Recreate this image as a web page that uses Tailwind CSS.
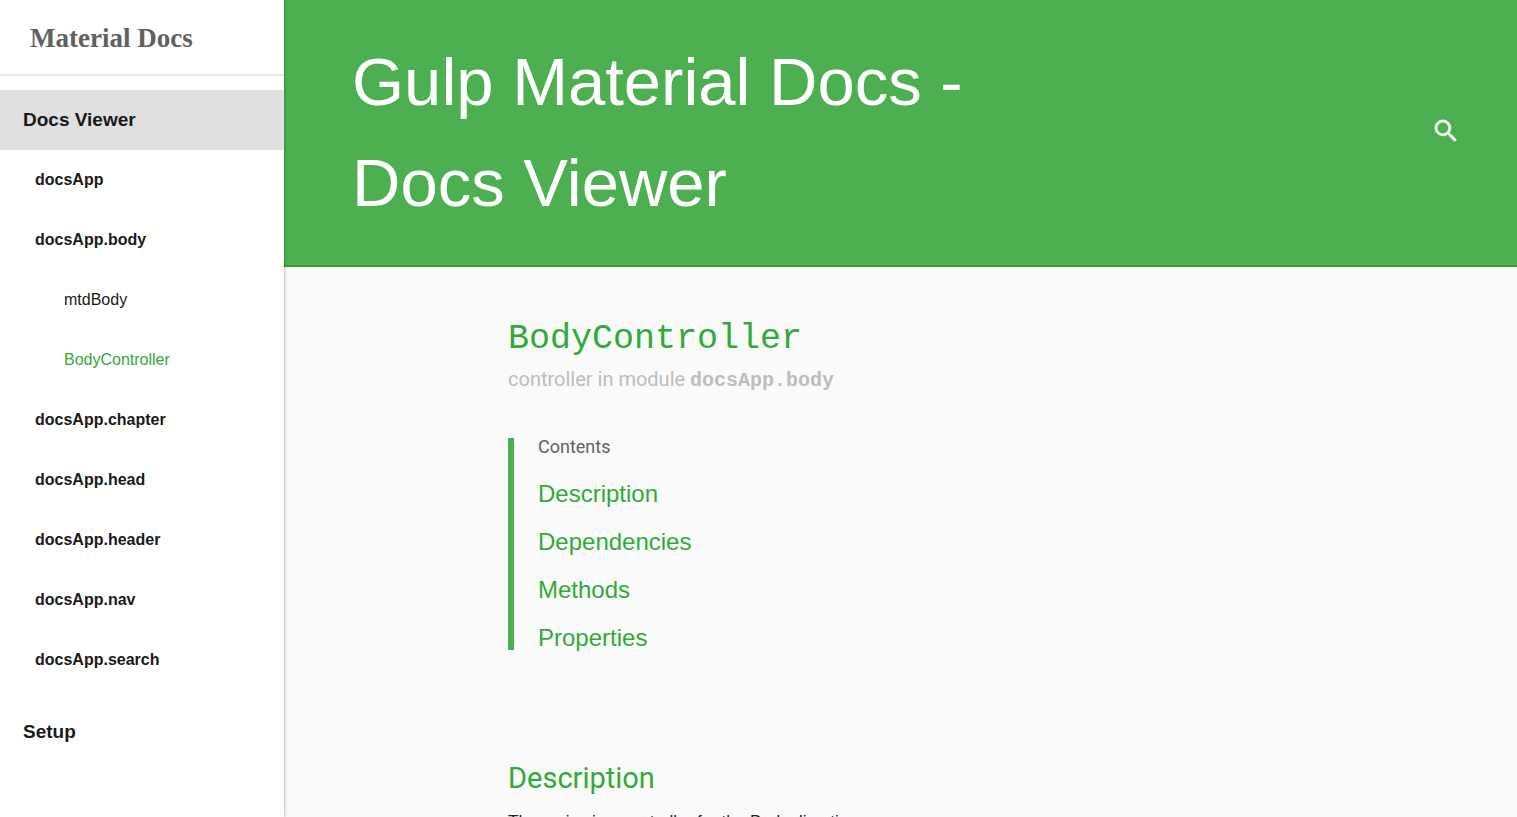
<!DOCTYPE html>
<html lang="en">
<head>
<meta charset="utf-8">
<title>Gulp Material Docs</title>
<script src="https://cdn.jsdelivr.net/npm/@tailwindcss/browser@4"></script>
</head>
<body class="flex h-screen overflow-hidden bg-[#fafafa] font-['Liberation_Sans',sans-serif] text-[#212121]">
<aside class="z-10 w-71 shrink-0 overflow-hidden bg-white shadow-[0_0_3px_rgba(0,0,0,0.4)]">
  <div class="flex h-19 items-center border-b-2 border-[#e7e7e7] pt-0.5 pl-[30px]">
    <a href="#" class="font-['Liberation_Serif',serif] text-[27px] font-bold text-[#616161]">Material Docs</a>
  </div>
  <nav class="mt-3.5 text-base leading-[60px] text-[#1a1a1a]">
    <a href="#" class="block bg-[#e0e0e0] pl-[23px] text-[19px] leading-[60px] font-bold">Docs Viewer</a>
    <a href="#" class="block pl-[35px] font-bold">docsApp</a>
    <a href="#" class="block pl-[35px] font-bold">docsApp.body</a>
    <a href="#" class="block pl-16">mtdBody</a>
    <a href="#" class="block pl-16 text-[#31ab37]">BodyController</a>
    <a href="#" class="block pl-[35px] font-bold">docsApp.chapter</a>
    <a href="#" class="block pl-[35px] font-bold">docsApp.head</a>
    <a href="#" class="block pl-[35px] font-bold">docsApp.header</a>
    <a href="#" class="block pl-[35px] font-bold">docsApp.nav</a>
    <a href="#" class="block pl-[35px] font-bold">docsApp.search</a>
    <a href="#" class="mt-3 block pl-[23px] text-[19px] leading-[60px] font-bold">Setup</a>
  </nav>
</aside>
<div class="min-w-0 flex-1">
  <header class="flex items-center justify-between border-b-2 border-[#25a72c] bg-[#4caf50] pt-[31px] pr-[55px] pb-8 pl-17 text-white">
    <h1 class="max-w-[680px] text-[67px] leading-[101px]">Gulp Material Docs - <br>Docs Viewer</h1>
    <button type="button" aria-label="Search" class="mb-0.5 flex size-8 items-center justify-center">
      <svg class="size-7.5" viewBox="0 0 24 24" fill="currentColor" stroke="currentColor" stroke-width=".3" aria-hidden="true"><path d="M15.5 14h-.79l-.28-.27A6.471 6.471 0 0 0 16 9.5 6.5 6.5 0 1 0 9.5 16c1.61 0 3.09-.59 4.23-1.57l.27.28v.79l5 4.99L20.49 19l-4.99-5zm-6 0C7.01 14 5 11.99 5 9.5S7.01 5 9.5 5 14 7.01 14 9.5 11.99 14 9.5 14z"/></svg>
    </button>
  </header>
  <main class="pt-12 pl-56">
    <h2 class="font-['Liberation_Mono',monospace] text-[35px] leading-12 text-[#31ab37]">BodyController</h2>
    <p class="font-[Roboto,sans-serif] text-xl leading-8 text-[#bdbdbd]">controller in module <code class="font-['Liberation_Mono',monospace] font-bold">docsApp.body</code></p>
    <section class="mt-[41px] border-l-6 border-[#4caf50] pl-6">
      <h3 class="font-[Roboto,sans-serif] text-lg leading-4.5 text-[#616161]">Contents</h3>
      <ul class="mt-6.5 flex flex-col gap-6 text-2xl leading-6 text-[#31ab37]">
        <li><a href="#description">Description</a></li>
        <li><a href="#">Dependencies</a></li>
        <li><a href="#">Methods</a></li>
        <li><a href="#">Properties</a></li>
      </ul>
    </section>
    <h2 id="description" class="mt-27 font-[Roboto,sans-serif] text-[29px] leading-10 text-[#31ab37]">Description</h2>
    <p class="mt-3 text-[17px] leading-6">The main view controller for the Body directive.</p>
  </main>
</div>
</body>
</html>
